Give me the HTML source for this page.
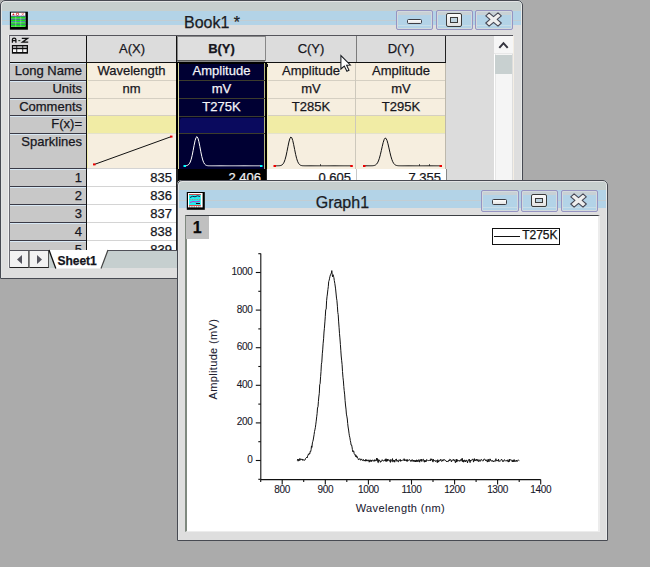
<!DOCTYPE html>
<html><head><meta charset="utf-8">
<style>
*{margin:0;padding:0;box-sizing:border-box}
html,body{width:650px;height:567px;overflow:hidden;background:#ababab;font-family:"Liberation Sans",sans-serif;color:#161620}
.a{position:absolute}
.t{position:absolute;white-space:nowrap;line-height:1;-webkit-text-stroke:0.25px currentColor}
.win{position:absolute;overflow:hidden;background:#dedede;border-radius:5px 5px 0 0}
.wbd{position:absolute;border:1px solid #474a52;border-radius:5px 5px 0 0;box-shadow:inset 1px 1px 0 #e2e4e4,inset -1px 0 0 #e8eaea}
.btn{position:absolute;border:1px solid #9694c2;border-radius:2px;background:linear-gradient(#c8d1d5 0,#c8d1d5 21%,#b3d3e7 21%,#b3d3e7 78%,#c8dde8 78%,#c8dde8 84%,#b3d3e7 84%);box-shadow:inset 0 0 0 1px #d3dadd}
.rh{position:absolute;left:10px;width:76px;background:#c8c8c8;border-top:1px solid #d8e8f4;border-bottom:1px solid #3a3a46;font-size:13px;line-height:1}
.rh span{position:absolute;right:4px;top:2px;white-space:nowrap;-webkit-text-stroke:0.25px currentColor}
.pl{font-size:10px;letter-spacing:-0.35px;color:#18182a;-webkit-text-stroke:0.1px currentColor}
</style></head>
<body>
<!-- ===== BOOK1 WINDOW ===== -->
<div class="win" style="left:0;top:0;width:523px;height:279px">
  <div class="a" style="left:0;top:0;width:523px;height:11px;background:#c6cfce"></div>
  <div class="a" style="left:0;top:11px;width:523px;height:14px;background:#b3d3e7"></div>
  <div class="a" style="left:0;top:20px;width:523px;height:1px;background:#c3cdd2"></div>
</div>
<div class="wbd" style="left:0;top:0;width:523px;height:279px"></div>
<!-- book icon -->
<svg class="a" style="left:0;top:0" width="40" height="40" viewBox="0 0 40 40">
  <rect x="9.9" y="11.7" width="18" height="18" fill="#000"/>
  <rect x="11" y="12.6" width="14.4" height="14.2" fill="#fff"/>
  <path d="M12 15.3 L13.4 13.3 L14.8 15.3 Z" fill="#e01818"/>
  <circle cx="17.5" cy="14.3" r="1.2" fill="none" stroke="#e02020" stroke-width="0.9"/>
  <path d="M21.5 13.2 L23.8 15.3 M23.8 13.2 L21.5 15.3" stroke="#f07070" stroke-width="0.9"/>
  <rect x="11" y="15.8" width="14.4" height="0.9" fill="#101090"/>
  <rect x="11" y="16.7" width="14.4" height="2" fill="#18e018"/>
  <rect x="11" y="18.8" width="14.4" height="0.9" fill="#101090"/>
  <rect x="11" y="19.7" width="14.4" height="1.7" fill="#18e018"/>
  <rect x="11" y="21.4" width="14.4" height="0.9" fill="#1a3aa0"/>
  <rect x="11" y="22.3" width="14.4" height="1.6" fill="#18e018"/>
  <rect x="11" y="23.9" width="14.4" height="0.8" fill="#101090"/>
  <rect x="11" y="24.7" width="14.4" height="2" fill="#18e018"/>
  <rect x="15.4" y="16.7" width="0.8" height="10" fill="#e8f8e8" opacity="0.45"/>
  <rect x="20.4" y="16.7" width="0.8" height="10" fill="#e8f8e8" opacity="0.45"/>
</svg>
<div class="t" style="left:184px;top:15.2px;font-size:16px;color:#1c1c22">Book1 *</div>
<!-- buttons -->
<div class="btn" style="left:396px;top:10px;width:37px;height:20px"></div>
<div class="btn" style="left:435.5px;top:10px;width:37px;height:20px"></div>
<div class="btn" style="left:475px;top:10px;width:37.5px;height:20px"></div>
<div class="a" style="left:406.8px;top:18.8px;width:15.2px;height:5.6px;border:1px solid #3e3e44;border-radius:1.5px;background:linear-gradient(#fdfdfd,#e4e4e4)"></div>
<div class="a" style="left:446.2px;top:13px;width:15.6px;height:13.6px;border:1px solid #3a3a3a;border-radius:2px;background:linear-gradient(#fafafa,#e2e2e2)"><div class="a" style="left:2.7px;top:3.1px;width:8.2px;height:5.7px;border:1.3px solid #3a3a3a;background:#c0d4e0"></div></div>
<svg class="a" style="left:484.7px;top:12.2px" width="17" height="15" viewBox="-0.8 -0.8 17 15"><polygon points="0,3.1 3.3,0 7.75,3.8 12.2,0 15.5,3.1 11.4,6.65 15.5,10.2 12.2,13.3 7.75,9.5 3.3,13.3 0,10.2 4.1,6.65" fill="#eeeeee" stroke="#454552" stroke-width="1.1" stroke-linejoin="round"/></svg>

<!-- grid frame -->
<div class="a" style="left:8px;top:35px;width:1px;height:233px;background:#f0f0f0"></div>
<div class="a" style="left:9px;top:35px;width:504px;height:233px;background:#dcdcdc;border-top:1px solid #55555c;border-left:1px solid #6c6c74"></div>
<!-- A-Z icon -->
<svg class="a" style="left:0;top:0" width="40" height="60" viewBox="0 0 40 60">
  <path d="M12.4 42.8 V39.6 Q12.4 38.1 14.1 38.1 Q15.9 38.1 15.9 39.6 V42.8 M12.4 40.6 H15.9" stroke="#111" stroke-width="1.25" fill="none"/>
  <path d="M18.3 40.6 H20.3" stroke="#2a3a2a" stroke-width="1.1"/>
  <path d="M21.8 38.3 H27.6 L22.4 42.2 H28.2" stroke="#111" stroke-width="1.3" fill="none"/>
  <rect x="11.9" y="45" width="16.1" height="8.7" fill="#0c0c0c"/>
  <rect x="13" y="46.3" width="3.3" height="1.5" fill="#cfcfcf"/><rect x="17.2" y="46.3" width="5.1" height="1.5" fill="#cfcfcf"/><rect x="23.2" y="46.3" width="3.5" height="1.5" fill="#cfcfcf"/>
  <rect x="13" y="49.2" width="3.3" height="2.8" fill="#fafafa"/><rect x="17.2" y="49.2" width="5.1" height="2.8" fill="#fafafa"/><rect x="23.2" y="49.2" width="3.5" height="2.8" fill="#fafafa"/>
</svg>
<!-- header row lines -->
<div class="a" style="left:10px;top:62px;width:436px;height:1px;background:#111"></div>
<div class="a" style="left:86px;top:36px;width:1px;height:214px;background:#111"></div>
<div class="a" style="left:84.5px;top:63px;width:1px;height:187px;background:#cfe3f0"></div>
<div class="a" style="left:355.5px;top:36px;width:1px;height:26px;background:#7c7c7c"></div>
<div class="a" style="left:445px;top:36px;width:1px;height:26px;background:#222"></div>
<div class="t" style="left:87px;top:41.8px;width:90px;text-align:center;font-size:13px">A(X)</div>
<div class="t" style="left:266px;top:41.8px;width:90px;text-align:center;font-size:13px">C(Y)</div>
<div class="t" style="left:356px;top:41.8px;width:90px;text-align:center;font-size:13px">D(Y)</div>

<!-- row headers -->
<div class="rh" style="top:63px;height:18px"><span style="top:0.2px">Long Name</span></div>
<div class="rh" style="top:81px;height:18px"><span style="top:0.2px">Units</span></div>
<div class="rh" style="top:99px;height:17px"><span style="top:0.2px">Comments</span></div>
<div class="rh" style="top:116px;height:18px"><span style="top:0.2px">F(x)=</span></div>
<div class="rh" style="top:134px;height:35px"><span style="top:-0.5px">Sparklines</span></div>
<div class="rh" style="top:169px;height:18px"><span style="top:0.5px">1</span></div>
<div class="rh" style="top:187px;height:18px"><span style="top:0.5px">2</span></div>
<div class="rh" style="top:205px;height:18px"><span style="top:0.5px">3</span></div>
<div class="rh" style="top:223px;height:18px"><span style="top:0.5px">4</span></div>
<div class="rh" style="top:241px;height:18px"><span style="top:0.5px">5</span></div>

<!-- A, C, D label cells (cream) -->
<div class="a" style="left:87px;top:63px;width:89px;height:53px;background:#f6eedf"></div>
<div class="a" style="left:266px;top:63px;width:180px;height:53px;background:#f6eedf"></div>
<div class="a" style="left:87px;top:116px;width:89px;height:17px;background:#f1eca5"></div>
<div class="a" style="left:266px;top:116px;width:180px;height:17px;background:#f1eca5"></div>
<div class="a" style="left:87px;top:134px;width:89px;height:35px;background:#f6eedf"></div>
<div class="a" style="left:266px;top:134px;width:180px;height:35px;background:#f6eedf"></div>
<!-- cream row separators -->
<div class="a" style="left:87px;top:80px;width:89px;height:1px;background:#d5cfc2"></div>
<div class="a" style="left:87px;top:98px;width:89px;height:1px;background:#d5cfc2"></div>
<div class="a" style="left:87px;top:115px;width:89px;height:1px;background:#d5cfc2"></div>
<div class="a" style="left:87px;top:133px;width:89px;height:1px;background:#e4e2cc"></div>
<div class="a" style="left:266px;top:80px;width:180px;height:1px;background:#d5cfc2"></div>
<div class="a" style="left:266px;top:98px;width:180px;height:1px;background:#d5cfc2"></div>
<div class="a" style="left:266px;top:115px;width:180px;height:1px;background:#d5cfc2"></div>
<div class="a" style="left:266px;top:133px;width:180px;height:1px;background:#e4e2cc"></div>
<div class="a" style="left:355px;top:63px;width:1px;height:106px;background:#cdc8bc"></div>
<div class="a" style="left:445px;top:63px;width:1px;height:106px;background:#bdb8ac"></div>
<div class="a" style="left:87px;top:63px;width:1px;height:106px;background:#f2f0b0"></div>
<div class="a" style="left:267px;top:63px;width:1px;height:106px;background:#f2f0b0"></div>

<!-- B column selected -->
<div class="a" style="left:176px;top:62px;width:91px;height:118px;background:#000;"></div>
<div class="a" style="left:177.5px;top:63px;width:1px;height:117px;background:#d8d89a"></div>
<div class="a" style="left:178.5px;top:63.5px;width:85.5px;height:105px;background:#000033"></div>
<div class="a" style="left:264px;top:63px;width:1px;height:117px;background:#b8b880"></div>
<div class="a" style="left:178.5px;top:80px;width:86px;height:1px;background:#3c3c2c"></div>
<div class="a" style="left:178.5px;top:98px;width:86px;height:1px;background:#3c3c2c"></div>
<div class="a" style="left:178.5px;top:115.5px;width:86px;height:1px;background:#3c3c2c"></div>
<div class="a" style="left:180px;top:118px;width:84px;height:15px;background:#0a0a5e;border-radius:2px 0 0 0"></div>
<div class="a" style="left:178.5px;top:133.3px;width:86px;height:1px;background:#3c3c2c"></div>
<div class="a" style="left:264.5px;top:64px;width:3px;height:3px;background:#111"></div>
<!-- B(Y) header with focus -->
<div class="a" style="left:177px;top:36px;width:89px;height:26px;background:#dedede"></div>
<div class="a" style="left:176px;top:36px;width:1px;height:26px;background:#111"></div>
<svg class="a" style="left:0;top:0" width="280" height="70" viewBox="0 0 280 70"><rect x="177.5" y="36.5" width="88" height="24" fill="none" stroke="#303030" stroke-width="1" stroke-dasharray="1 1"/><path d="M177.5 61 H265.5" stroke="#303030" stroke-width="2" stroke-dasharray="1 1"/></svg>
<div class="t" style="left:177px;top:41.8px;width:89px;text-align:center;font-size:13px;font-weight:bold">B(Y)</div>

<!-- label texts -->
<div class="t" style="left:87px;top:64.2px;width:89px;text-align:center;font-size:13px">Wavelength</div>
<div class="t" style="left:87px;top:82.2px;width:89px;text-align:center;font-size:13px">nm</div>
<div class="t" style="left:177px;top:64.2px;width:89px;text-align:center;font-size:13px;color:#f4f4f8">Amplitude</div>
<div class="t" style="left:177px;top:82.2px;width:89px;text-align:center;font-size:13px;color:#f4f4f8">mV</div>
<div class="t" style="left:177px;top:100.2px;width:89px;text-align:center;font-size:13px;color:#f4f4f8">T275K</div>
<div class="t" style="left:266px;top:64.2px;width:90px;text-align:center;font-size:13px">Amplitude</div>
<div class="t" style="left:266px;top:82.2px;width:90px;text-align:center;font-size:13px">mV</div>
<div class="t" style="left:266px;top:100.2px;width:90px;text-align:center;font-size:13px">T285K</div>
<div class="t" style="left:356px;top:64.2px;width:90px;text-align:center;font-size:13px">Amplitude</div>
<div class="t" style="left:356px;top:82.2px;width:90px;text-align:center;font-size:13px">mV</div>
<div class="t" style="left:356px;top:100.2px;width:90px;text-align:center;font-size:13px">T295K</div>

<!-- data rows -->
<div class="a" style="left:87px;top:169px;width:89px;height:81px;background:#fff"></div>
<div class="a" style="left:266px;top:169px;width:180px;height:12px;background:#fff"></div>
<div class="a" style="left:87px;top:168px;width:89px;height:1px;background:#d4d4d4"></div>
<div class="a" style="left:87px;top:186px;width:89px;height:1px;background:#d4d4d4"></div>
<div class="a" style="left:87px;top:204px;width:89px;height:1px;background:#d4d4d4"></div>
<div class="a" style="left:87px;top:222px;width:89px;height:1px;background:#d4d4d4"></div>
<div class="a" style="left:87px;top:240px;width:89px;height:1px;background:#d4d4d4"></div>
<div class="a" style="left:176px;top:169px;width:1.5px;height:81px;background:#222"></div>
<div class="a" style="left:178px;top:169px;width:87px;height:12px;background:#000"></div>
<div class="a" style="left:265.5px;top:169px;width:1px;height:12px;background:#222"></div>
<div class="a" style="left:355.5px;top:169px;width:1px;height:12px;background:#c8c8c8"></div>
<div class="a" style="left:445.5px;top:169px;width:1px;height:12px;background:#888"></div>
<div class="t" style="left:87px;top:170.5px;width:85px;text-align:right;font-size:13px">835</div>
<div class="t" style="left:87px;top:188.5px;width:85px;text-align:right;font-size:13px">836</div>
<div class="t" style="left:87px;top:206.5px;width:85px;text-align:right;font-size:13px">837</div>
<div class="t" style="left:87px;top:224.5px;width:85px;text-align:right;font-size:13px">838</div>
<div class="t" style="left:87px;top:242.5px;width:85px;text-align:right;font-size:13px">839</div>
<div class="t" style="left:178px;top:170.5px;width:83px;text-align:right;font-size:13px;color:#f0f0f0">2.406</div>
<div class="t" style="left:266px;top:170.5px;width:85px;text-align:right;font-size:13px">0.605</div>
<div class="t" style="left:356px;top:170.5px;width:85px;text-align:right;font-size:13px">7.355</div>

<!-- sparklines -->
<svg class="a" style="left:0;top:0" width="650" height="567"><polyline points="94.5,164.4 171.3,136.6" stroke="#111" stroke-width="1" fill="none"/><rect x="93" y="163.4" width="2.5" height="2" fill="#e00"/><rect x="170" y="135.6" width="2.5" height="2" fill="#e00"/><polyline points="184.50,165.78 185.46,165.73 186.42,165.62 187.38,165.37 188.34,164.82 189.30,163.79 190.26,162.00 191.22,159.22 192.18,155.34 193.14,150.54 194.10,145.38 195.06,140.73 196.02,137.56 196.98,136.62 197.94,138.14 198.90,141.74 199.86,146.60 200.82,151.75 201.78,156.36 202.74,159.99 203.70,162.51 204.66,164.10 205.62,164.99 206.58,165.45 207.54,165.66 208.50,165.75 209.46,165.78 210.42,165.79 211.38,165.80 212.34,165.80 213.30,165.80 214.26,165.80 215.22,165.80 216.18,165.80 217.14,165.80 218.10,165.80 219.06,165.80 220.02,165.80 220.98,165.80 221.94,165.80 222.90,165.80 223.86,165.80 224.82,165.80 225.78,165.80 226.74,165.80 227.70,165.80 228.66,165.80 229.62,165.80 230.58,165.80 231.54,165.80 232.50,165.80 233.46,165.80 234.42,165.80 235.38,165.80 236.34,165.80 237.30,165.80 238.26,165.80 239.22,165.80 240.18,165.80 241.14,165.80 242.10,165.80 243.06,165.80 244.02,165.80 244.98,165.80 245.94,165.80 246.90,165.80 247.86,165.80 248.82,165.80 249.78,165.80 250.74,165.80 251.70,165.80 252.66,165.80 253.62,165.80 254.58,165.80 255.54,165.80 256.50,165.80 257.46,165.80 258.42,165.80 259.38,165.80 260.34,165.80 261.30,165.80" stroke="#fff" stroke-width="1" fill="none"/><rect x="183.5" y="165" width="2.5" height="2" fill="#0ff"/><rect x="260" y="165" width="2.5" height="2" fill="#0ff"/><polyline points="274.50,165.80 275.46,165.80 276.42,165.80 277.38,165.79 278.34,165.77 279.30,165.72 280.26,165.61 281.22,165.35 282.18,164.82 283.14,163.83 284.10,162.16 285.06,159.59 286.02,156.02 286.98,151.56 287.94,146.66 288.90,142.06 289.86,138.61 290.82,137.05 291.78,137.73 292.74,140.49 293.70,144.74 294.66,149.62 295.62,154.32 296.58,158.28 297.54,161.25 298.50,163.26 299.46,164.49 300.42,165.18 301.38,165.53 302.34,165.69 303.30,165.76 304.26,165.79 305.22,165.80 306.18,165.80 307.14,165.80 308.10,165.80 309.06,165.80 310.02,165.80 310.98,165.80 311.94,165.80 312.90,165.80 313.86,165.80 314.82,165.80 315.78,165.80 316.74,165.80 317.70,165.80 318.66,165.80 319.62,165.80 320.58,165.80 321.54,165.80 322.50,165.80 323.46,165.80 324.42,165.80 325.38,165.80 326.34,165.80 327.30,165.80 328.26,165.80 329.22,165.80 330.18,165.80 331.14,165.80 332.10,165.80 333.06,165.80 334.02,165.80 334.98,165.80 335.94,165.80 336.90,165.80 337.86,165.80 338.82,165.80 339.78,165.80 340.74,165.80 341.70,165.80 342.66,165.80 343.62,165.80 344.58,165.80 345.54,165.80 346.50,165.80 347.46,165.80 348.42,165.80 349.38,165.80 350.34,165.80 351.30,165.80" stroke="#111" stroke-width="1" fill="none"/><rect x="273.5" y="165" width="2.5" height="2" fill="#e00"/><rect x="350.3" y="165" width="2.5" height="2" fill="#e00"/><polyline points="364.10,165.80 365.06,165.80 366.01,165.80 366.97,165.80 367.92,165.80 368.88,165.80 369.83,165.80 370.79,165.79 371.74,165.77 372.69,165.72 373.65,165.60 374.61,165.38 375.56,164.94 376.52,164.17 377.47,162.90 378.43,160.97 379.38,158.26 380.34,154.77 381.29,150.69 382.25,146.40 383.20,142.48 384.16,139.54 385.11,138.09 386.06,138.42 387.02,140.45 387.98,143.81 388.93,147.94 389.88,152.20 390.84,156.11 391.80,159.32 392.75,161.75 393.71,163.43 394.66,164.50 395.62,165.13 396.57,165.48 397.53,165.65 398.48,165.74 399.44,165.78 400.39,165.79 401.35,165.80 402.30,165.80 403.25,165.80 404.21,165.80 405.17,165.80 406.12,165.80 407.07,165.80 408.03,165.80 408.99,165.80 409.94,165.80 410.89,165.80 411.85,165.80 412.81,165.80 413.76,165.80 414.72,165.80 415.67,165.80 416.62,165.80 417.58,165.80 418.54,165.80 419.49,165.80 420.44,165.80 421.40,165.80 422.36,165.80 423.31,165.80 424.26,165.80 425.22,165.80 426.18,165.80 427.13,165.80 428.08,165.80 429.04,165.80 430.00,165.80 430.95,165.80 431.90,165.80 432.86,165.80 433.81,165.80 434.77,165.80 435.73,165.80 436.68,165.80 437.63,165.80 438.59,165.80 439.55,165.80 440.50,165.80" stroke="#111" stroke-width="1" fill="none"/><rect x="363" y="165" width="2.5" height="2" fill="#e00"/><rect x="439.5" y="165" width="2.5" height="2" fill="#e00"/><rect x="320" y="164.3" width="1" height="1.5" fill="#222"/><rect x="419" y="164.3" width="1" height="1.5" fill="#222"/><rect x="429" y="164.3" width="1" height="1.5" fill="#222"/></svg>

<!-- tab bar -->
<div class="a" style="left:10px;top:250px;width:503px;height:18px;background:#c6cfcf;border-top:1px solid #505058"></div>
<div class="a" style="left:10px;top:251px;width:19px;height:17px;background:#f2f2f2;border-right:1px solid #666;border-bottom:1px solid #222"></div>
<div class="a" style="left:29px;top:251px;width:20px;height:17px;background:#f2f2f2;border-left:1px solid #888;border-right:1px solid #555;border-bottom:1px solid #222"></div>
<svg class="a" style="left:10px;top:251px" width="40" height="17" viewBox="0 0 40 17"><path d="M12 4 L7 8.5 L12 13 Z" fill="#55555f"/><path d="M27 4 L32 8.5 L27 13 Z" fill="#55555f"/></svg>
<svg class="a" style="left:40px;top:249px" width="80" height="21" viewBox="0 0 80 21">
  <polygon points="9,1 68,1 61,19.5 15.8,19.5" fill="#fff"/>
  <path d="M9 1 L15.8 19.5" stroke="#111" stroke-width="1.3"/>
  <path d="M68 1 L61 19.5" stroke="#444" stroke-width="1.2"/>
</svg>
<div class="t" style="left:57.4px;top:254.5px;font-size:12px;font-weight:bold;color:#14141c">Sheet1</div>

<!-- scrollbar -->
<div class="a" style="left:494px;top:36px;width:19px;height:232px;background:#f5f5f5;border-left:1px solid #fff;box-shadow:inset -1px 0 0 #dedede, inset 1px 0 0 #e6e6e6"></div>
<div class="a" style="left:494px;top:36px;width:19px;height:18px;background:#f6f6f6;border-bottom:1px solid #e8e8e8"></div>
<svg class="a" style="left:0;top:0" width="520" height="60" viewBox="0 0 520 60"><path d="M499.3 47.8 L503.5 43.2 L507.7 47.8" stroke="#34343e" stroke-width="2" fill="none"/></svg>
<div class="a" style="left:495px;top:54.5px;width:17px;height:19px;background:#c8d0d0"></div>
<div class="a" style="left:513px;top:36px;width:1px;height:232px;background:#f4eee4"></div>

<!-- ===== GRAPH1 WINDOW ===== -->
<div class="win" style="left:177px;top:180px;width:431px;height:361px">
  <div class="a" style="left:0;top:0;width:431px;height:10px;background:#c6cfce"></div>
  <div class="a" style="left:0;top:10px;width:431px;height:17.5px;background:#b3d3e7"></div>
  <div class="a" style="left:0;top:20px;width:431px;height:1.2px;background:#c3cdd2"></div>
</div>
<div class="wbd" style="left:177px;top:180px;width:431px;height:361px"></div>
<svg class="a" style="left:0;top:0" width="220" height="220" viewBox="0 0 220 220">
  <rect x="186.8" y="192" width="18" height="17.8" fill="#000"/>
  <rect x="188" y="193" width="14.6" height="14.4" fill="#fff"/>
  <rect x="189" y="194.3" width="11.8" height="10.8" fill="#22eeee"/>
  <rect x="189" y="194" width="11.8" height="0.9" fill="#d83a3a"/>
  <rect x="189" y="205" width="11.8" height="0.9" fill="#d83a3a"/>
  <path d="M190 197.5 L192.5 196.3 L195 196.8 L197.5 195.8 L200 196.5" stroke="#1a1a4a" stroke-width="1" fill="none"/>
  <path d="M189.5 199.5 L200.5 199.5" stroke="#d06a6a" stroke-width="0.8" stroke-dasharray="1.2 1.2"/>
  <path d="M190 202.5 L193 201.5 L196 202 L200 201" stroke="#c828c8" stroke-width="1" fill="none"/>
  <path d="M196 203.5 L200 203.5" stroke="#111" stroke-width="1"/>
  <path d="M189 207 L201 207" stroke="#111" stroke-width="0.8" stroke-dasharray="1.3 1"/>
</svg>
<div class="t" style="left:315.7px;top:195.2px;font-size:16px;color:#1c1c22">Graph1</div>
<div class="btn" style="left:481px;top:190px;width:37.5px;height:21.5px"></div>
<div class="btn" style="left:521px;top:190px;width:36.5px;height:21.5px"></div>
<div class="btn" style="left:560.5px;top:190px;width:37px;height:21.5px"></div>
<div class="a" style="left:492px;top:199px;width:15.2px;height:5.8px;border:1px solid #3e3e44;border-radius:1.5px;background:linear-gradient(#fdfdfd,#e4e4e4)"></div>
<div class="a" style="left:531.3px;top:193.8px;width:15.6px;height:13.2px;border:1px solid #3a3a3a;border-radius:2px;background:linear-gradient(#fafafa,#e2e2e2)"><div class="a" style="left:2.7px;top:3px;width:8.2px;height:5.5px;border:1.3px solid #3a3a3a;background:#c0d4e0"></div></div>
<svg class="a" style="left:570.0px;top:193.2px" width="17" height="15" viewBox="-0.8 -0.8 17 15"><polygon points="0,3.1 3.3,0 7.75,3.8 12.2,0 15.5,3.1 11.4,6.65 15.5,10.2 12.2,13.3 7.75,9.5 3.3,13.3 0,10.2 4.1,6.65" fill="#eeeeee" stroke="#454552" stroke-width="1.1" stroke-linejoin="round"/></svg>

<!-- canvas -->
<div class="a" style="left:185px;top:215px;width:415px;height:317px;background:#fff;border-top:1px solid #3c3f44;border-left:2px solid #7f897f;border-right:2px solid #ececec;border-bottom:1px solid #ececec"></div>
<div class="a" style="left:186px;top:216px;width:22.6px;height:22.8px;background:#c0c0c0"></div>
<div class="t" style="left:186px;top:220.1px;width:22.6px;text-align:center;font-size:16px;font-weight:bold;color:#0a0a0a">1</div>

<!-- plot -->
<svg class="a" style="left:0;top:0" width="650" height="567">
<g stroke="#111" stroke-width="1.1" fill="none">
<line x1="260.8" y1="253.5" x2="260.8" y2="479.6"/>
<line x1="258.3" y1="479.3" x2="260.8" y2="479.3"/>
<line x1="255.8" y1="460.5" x2="260.8" y2="460.5"/>
<line x1="258.3" y1="441.7" x2="260.8" y2="441.7"/>
<line x1="255.8" y1="422.9" x2="260.8" y2="422.9"/>
<line x1="258.3" y1="404.1" x2="260.8" y2="404.1"/>
<line x1="255.8" y1="385.3" x2="260.8" y2="385.3"/>
<line x1="258.3" y1="366.5" x2="260.8" y2="366.5"/>
<line x1="255.8" y1="347.7" x2="260.8" y2="347.7"/>
<line x1="258.3" y1="328.9" x2="260.8" y2="328.9"/>
<line x1="255.8" y1="310.1" x2="260.8" y2="310.1"/>
<line x1="258.3" y1="291.3" x2="260.8" y2="291.3"/>
<line x1="255.8" y1="272.5" x2="260.8" y2="272.5"/>
<line x1="258.3" y1="253.7" x2="260.8" y2="253.7"/>
<line x1="260.8" y1="479.6" x2="540.7" y2="479.6"/>
<line x1="260.7" y1="479.6" x2="260.7" y2="482.1"/>
<line x1="282.2" y1="479.6" x2="282.2" y2="484.6"/>
<line x1="303.7" y1="479.6" x2="303.7" y2="482.1"/>
<line x1="325.3" y1="479.6" x2="325.3" y2="484.6"/>
<line x1="346.8" y1="479.6" x2="346.8" y2="482.1"/>
<line x1="368.4" y1="479.6" x2="368.4" y2="484.6"/>
<line x1="389.9" y1="479.6" x2="389.9" y2="482.1"/>
<line x1="411.5" y1="479.6" x2="411.5" y2="484.6"/>
<line x1="433.0" y1="479.6" x2="433.0" y2="482.1"/>
<line x1="454.6" y1="479.6" x2="454.6" y2="484.6"/>
<line x1="476.1" y1="479.6" x2="476.1" y2="482.1"/>
<line x1="497.6" y1="479.6" x2="497.6" y2="484.6"/>
<line x1="519.2" y1="479.6" x2="519.2" y2="482.1"/>
<line x1="540.7" y1="479.6" x2="540.7" y2="484.6"/>
</g>
<polyline points="297.3,460.3 297.7,459.2 298.1,461.2 298.6,459.4 299.0,460.5 299.4,460.5 299.9,458.4 300.3,460.0 300.7,460.1 301.2,459.3 301.6,458.9 302.0,459.9 302.5,459.2 302.9,460.5 303.3,459.8 303.7,459.7 304.2,460.3 304.6,460.2 305.0,460.1 305.5,458.5 305.9,458.1 306.3,457.8 306.8,457.0 307.2,457.8 307.6,456.1 308.1,455.1 308.5,453.9 308.9,454.6 309.3,453.3 309.8,453.9 310.2,451.4 310.6,451.8 311.1,449.7 311.5,445.9 311.9,447.4 312.4,442.9 312.8,441.4 313.2,440.0 313.7,437.0 314.1,434.6 314.5,431.5 314.9,429.9 315.4,427.3 315.8,424.2 316.2,421.2 316.7,416.8 317.1,413.7 317.5,408.0 318.0,406.7 318.4,401.6 318.8,397.0 319.3,393.3 319.7,384.7 320.1,383.8 320.6,376.7 321.0,371.6 321.4,364.2 321.8,362.2 322.3,353.8 322.7,349.9 323.1,343.8 323.6,338.8 324.0,332.0 324.4,328.3 324.9,321.9 325.3,316.3 325.7,309.9 326.2,309.0 326.6,300.7 327.0,296.8 327.4,294.0 327.9,289.5 328.3,286.7 328.7,281.6 329.2,280.2 329.6,278.2 330.0,276.3 330.5,274.7 330.9,273.6 331.3,273.5 331.8,270.6 332.2,274.5 332.6,276.8 333.0,274.6 333.5,276.2 333.9,277.7 334.3,280.6 334.8,283.3 335.2,286.0 335.6,288.9 336.1,294.0 336.5,298.1 336.9,300.3 337.4,306.2 337.8,312.5 338.2,314.5 338.6,321.1 339.1,327.8 339.5,333.7 339.9,337.9 340.4,344.5 340.8,350.2 341.2,356.0 341.7,360.8 342.1,364.7 342.5,371.5 343.0,377.7 343.4,380.9 343.8,386.5 344.2,390.6 344.7,394.9 345.1,400.7 345.5,405.0 346.0,409.1 346.4,414.1 346.8,416.1 347.3,419.0 347.7,423.5 348.1,427.0 348.6,430.0 349.0,433.2 349.4,435.8 349.9,437.8 350.3,440.5 350.7,442.1 351.1,445.1 351.6,445.0 352.0,446.9 352.4,449.5 352.9,451.9 353.3,450.9 353.7,450.9 354.2,453.7 354.6,454.3 355.0,455.2 355.5,454.7 355.9,456.9 356.3,455.6 356.7,457.3 357.2,456.6 357.6,457.9 358.0,458.5 358.5,459.9 358.9,459.5 359.3,459.3 359.8,458.6 360.2,459.2 360.6,460.3 361.1,459.3 361.5,458.9 361.9,460.1 362.3,460.4 362.8,460.5 363.2,459.4 363.6,459.7 364.1,461.1 364.5,460.0 364.9,460.8 365.4,461.1 365.8,459.2 366.2,459.6 366.7,461.1 367.1,460.4 367.5,460.0 367.9,461.1 368.4,460.6 368.8,459.8 369.2,462.2 369.7,460.2 370.1,459.8 370.5,460.0 371.0,461.8 371.4,460.2 371.8,461.3 372.3,460.0 372.7,459.9 373.1,460.3 373.6,461.2 374.0,461.1 374.4,459.7 374.8,461.3 375.3,460.0 375.7,460.0 376.1,460.8 376.6,458.2 377.0,460.4 377.4,458.5 377.9,462.4 378.3,462.6 378.7,459.6 379.2,459.9 379.6,460.8 380.0,460.6 380.4,462.3 380.9,461.1 381.3,461.5 381.7,460.7 382.2,459.7 382.6,460.5 383.0,460.2 383.5,461.2 383.9,460.9 384.3,460.4 384.8,460.8 385.2,459.3 385.6,461.3 386.0,458.7 386.5,461.4 386.9,459.5 387.3,461.2 387.8,459.0 388.2,460.4 388.6,460.1 389.1,459.8 389.5,461.1 389.9,461.5 390.4,462.4 390.8,459.4 391.2,461.2 391.6,461.1 392.1,460.5 392.5,458.6 392.9,462.1 393.4,460.3 393.8,460.9 394.2,460.0 394.7,462.2 395.1,460.9 395.5,459.7 396.0,459.0 396.4,459.0 396.8,461.3 397.3,460.4 397.7,460.6 398.1,461.8 398.5,461.9 399.0,459.8 399.4,460.3 399.8,460.6 400.3,459.4 400.7,461.4 401.1,460.0 401.6,460.5 402.0,460.6 402.4,460.0 402.9,460.3 403.3,460.2 403.7,460.3 404.1,458.7 404.6,460.8 405.0,459.5 405.4,459.9 405.9,460.8 406.3,459.8 406.7,461.3 407.2,459.4 407.6,461.3 408.0,461.0 408.5,460.2 408.9,459.7 409.3,459.6 409.7,459.7 410.2,460.7 410.6,461.4 411.0,460.0 411.5,460.2 411.9,461.4 412.3,459.6 412.8,460.3 413.2,461.4 413.6,460.1 414.1,461.7 414.5,461.3 414.9,460.1 415.3,462.0 415.8,460.5 416.2,461.8 416.6,459.8 417.1,461.2 417.5,460.3 417.9,461.9 418.4,460.8 418.8,459.6 419.2,460.1 419.7,462.2 420.1,459.6 420.5,459.7 420.9,460.9 421.4,459.2 421.8,461.5 422.2,460.6 422.7,459.5 423.1,459.3 423.5,459.3 424.0,461.5 424.4,462.2 424.8,460.1 425.3,461.8 425.7,460.6 426.1,461.7 426.6,459.5 427.0,459.7 427.4,460.0 427.8,460.5 428.3,460.5 428.7,460.8 429.1,460.1 429.6,460.3 430.0,460.1 430.4,460.9 430.9,458.7 431.3,460.2 431.7,459.2 432.2,459.2 432.6,461.3 433.0,462.1 433.4,459.3 433.9,460.9 434.3,460.4 434.7,460.7 435.2,460.4 435.6,461.6 436.0,460.6 436.5,460.9 436.9,460.5 437.3,462.7 437.8,459.7 438.2,460.2 438.6,462.1 439.0,461.2 439.5,460.5 439.9,459.9 440.3,460.5 440.8,459.2 441.2,460.5 441.6,461.4 442.1,461.1 442.5,459.8 442.9,461.1 443.4,459.7 443.8,459.5 444.2,459.9 444.6,459.5 445.1,460.7 445.5,460.5 445.9,461.1 446.4,461.1 446.8,462.0 447.2,461.0 447.7,461.5 448.1,461.8 448.5,460.4 449.0,460.1 449.4,460.8 449.8,459.2 450.3,459.6 450.7,459.5 451.1,461.1 451.5,461.9 452.0,460.0 452.4,460.2 452.8,459.8 453.3,460.1 453.7,459.3 454.1,460.8 454.6,459.9 455.0,461.3 455.4,462.7 455.9,460.9 456.3,459.1 456.7,462.1 457.1,459.5 457.6,461.1 458.0,460.9 458.4,460.5 458.9,460.3 459.3,461.4 459.7,460.4 460.2,460.1 460.6,459.7 461.0,461.2 461.5,459.0 461.9,458.7 462.3,458.2 462.7,461.8 463.2,460.3 463.6,462.2 464.0,460.1 464.5,460.0 464.9,461.6 465.3,462.0 465.8,460.3 466.2,459.9 466.6,461.2 467.1,460.7 467.5,462.9 467.9,461.2 468.3,460.4 468.8,460.4 469.2,459.0 469.6,461.6 470.1,462.6 470.5,460.1 470.9,461.1 471.4,460.2 471.8,459.8 472.2,459.9 472.7,459.1 473.1,459.2 473.5,462.1 474.0,460.6 474.4,458.6 474.8,460.9 475.2,459.6 475.7,460.6 476.1,460.9 476.5,459.0 477.0,459.5 477.4,460.7 477.8,459.6 478.3,461.7 478.7,461.2 479.1,459.7 479.6,460.5 480.0,461.5 480.4,460.1 480.8,460.2 481.3,459.3 481.7,459.6 482.1,460.8 482.6,461.0 483.0,460.6 483.4,460.7 483.9,459.1 484.3,459.0 484.7,459.2 485.2,460.1 485.6,460.7 486.0,459.7 486.4,460.8 486.9,460.3 487.3,462.1 487.7,460.9 488.2,459.1 488.6,461.5 489.0,461.9 489.5,460.7 489.9,458.9 490.3,459.1 490.8,460.8 491.2,460.9 491.6,460.6 492.0,461.4 492.5,460.5 492.9,460.8 493.3,461.9 493.8,461.0 494.2,460.7 494.6,461.3 495.1,461.6 495.5,459.6 495.9,458.7 496.4,460.8 496.8,460.9 497.2,460.0 497.6,460.7 498.1,461.2 498.5,459.2 498.9,461.5 499.4,461.2 499.8,461.1 500.2,461.3 500.7,460.7 501.1,460.0 501.5,459.1 502.0,459.9 502.4,460.5 502.8,461.7 503.3,460.6 503.7,461.4 504.1,460.6 504.5,459.6 505.0,460.3 505.4,460.7 505.8,461.2 506.3,460.5 506.7,460.4 507.1,461.4 507.6,461.0 508.0,459.7 508.4,462.1 508.9,460.9 509.3,461.6 509.7,459.0 510.1,459.9 510.6,460.0 511.0,460.1 511.4,460.2 511.9,460.2 512.3,462.0 512.7,460.3 513.2,459.9 513.6,461.8 514.0,459.7 514.5,459.9 514.9,461.9 515.3,460.9 515.7,460.8 516.2,461.0 516.6,460.1 517.0,461.7 517.5,460.7 517.9,460.3 518.3,459.8 518.8,460.5 519.2,460.7" stroke="#111" stroke-width="1" fill="none"/>
</svg>
<div class="t pl" style="right:397.6px;top:455.0px">0</div>
<div class="t pl" style="right:397.6px;top:417.4px">200</div>
<div class="t pl" style="right:397.6px;top:379.8px">400</div>
<div class="t pl" style="right:397.6px;top:342.2px">600</div>
<div class="t pl" style="right:397.6px;top:304.6px">800</div>
<div class="t pl" style="right:397.6px;top:267.0px">1000</div>
<div class="t pl" style="left:262.2px;top:485px;width:40px;text-align:center">800</div>
<div class="t pl" style="left:305.3px;top:485px;width:40px;text-align:center">900</div>
<div class="t pl" style="left:348.4px;top:485px;width:40px;text-align:center">1000</div>
<div class="t pl" style="left:391.5px;top:485px;width:40px;text-align:center">1100</div>
<div class="t pl" style="left:434.6px;top:485px;width:40px;text-align:center">1200</div>
<div class="t pl" style="left:477.6px;top:485px;width:40px;text-align:center">1300</div>
<div class="t pl" style="left:520.7px;top:485px;width:40px;text-align:center">1400</div>
<div class="t" style="left:355.7px;top:502.5px;font-size:11px;letter-spacing:0.4px;color:#202030;-webkit-text-stroke:0.05px currentColor">Wavelength (nm)</div>
<div class="t" style="left:173px;top:353.5px;width:80px;text-align:center;font-size:11px;letter-spacing:0.35px;color:#202030;-webkit-text-stroke:0.05px currentColor;transform:rotate(-90deg);transform-origin:center">Amplitude (mV)</div>

<!-- legend -->
<div class="a" style="left:492px;top:228px;width:68px;height:17px;border:1px solid #111;background:#fff"></div>
<div class="a" style="left:494.3px;top:236px;width:25.6px;height:1px;background:#111"></div>
<div class="t" style="left:522.2px;top:229.2px;font-size:12px;color:#111">T275K</div>

<!-- cursor -->
<svg class="a" style="left:0;top:0" width="360" height="80" viewBox="0 0 360 80">
<path d="M340.9 55.6 L340.9 69 L344.3 66 L346.9 71.3 L349 70.3 L346.6 65.2 L350.3 65 Z" fill="#fff" stroke="#161a20" stroke-width="1.05" stroke-linejoin="miter"/>
</svg>
</body></html>
